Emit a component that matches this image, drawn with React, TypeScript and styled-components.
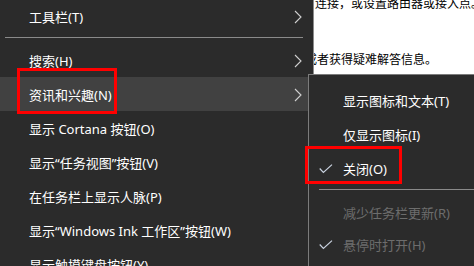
import React from 'react';
import styled, { createGlobalStyle } from 'styled-components';

const GlobalStyle = createGlobalStyle`
  html, body {
    margin: 0;
    padding: 0;
    background: #ffffff;
  }
  * {
    box-sizing: border-box;
  }
`;

// Latin face first so that quotes and brackets stay narrow, as in Microsoft YaHei UI
const FONT = `"Noto Sans", "Noto Sans CJK SC", sans-serif`;

interface MenuEntry {
  label: string;
  submenu?: boolean;
  hovered?: boolean;
}

const mainItems: MenuEntry[] = [
  { label: '搜索(H)', submenu: true },
  { label: '资讯和兴趣(N)', submenu: true, hovered: true },
  { label: '显示 Cortana 按钮(O)' },
  { label: '显示“任务视图”按钮(V)' },
  { label: '在任务栏上显示人脉(P)' },
  { label: '显示“Windows Ink 工作区”按钮(W)' },
  { label: '显示触摸键盘按钮(Y)' },
];

const Chevron = () => (
  <svg width="8" height="14" viewBox="0 0 8 14">
    <polyline points="1,1 7,7 1,13" fill="none" stroke="#d0d0d0" strokeWidth="1.1" />
  </svg>
);

const Check = () => (
  <svg width="14" height="10" viewBox="0 0 14 10">
    <polyline points="0.7,4.5 4.4,8.4 13,0.6" fill="none" stroke="#c9d2e0" strokeWidth="1.2" />
  </svg>
);

const App: React.FC = () => {
  return (
    <>
      <GlobalStyle />
      <Screen>
        <PageText>
          <PageLine $indent={315} $top={-5}>连接，或设置路由器或接入点。</PageLine>
          <PageLine $indent={305} $top={40}>或者获得疑难解答信息。</PageLine>
        </PageText>

        <ContextMenu>
          <MenuRow $height={32}>
            <span>工具栏(T)</span>
            <Chevron />
          </MenuRow>
          <Separator />
          {mainItems.map((item) => (
            <MenuRow key={item.label} $height={34} $hovered={item.hovered}>
              <span>{item.label}</span>
              {item.submenu && <Chevron />}
            </MenuRow>
          ))}
        </ContextMenu>

        <SubMenu>
          <SubRow $height={34}>显示图标和文本(T)</SubRow>
          <SubRow $height={34}>仅显示图标(I)</SubRow>
          <SubRow $height={34}>
            <CheckSlot>
              <Check />
            </CheckSlot>
            关闭(O)
          </SubRow>
          <SubSeparator />
          <SubRow $height={32} $disabled>减少任务栏更新(R)</SubRow>
          <SubRow $height={32} $disabled>
            <CheckSlot>
              <Check />
            </CheckSlot>
            悬停时打开(H)
          </SubRow>
        </SubMenu>

        <Highlight $left={17} $top={68} $width={100} $height={46} />
        <Highlight $left={305} $top={146} $width={97} $height={38} />
      </Screen>
    </>
  );
};

const Screen = styled.div`
  position: relative;
  width: 474px;
  height: 266px;
  overflow: hidden;
  background: #ffffff;
  font-family: ${FONT};
`;

const PageText = styled.div`
  display: flex;
  flex-direction: column;
`;

const PageLine = styled.p<{ $indent: number; $top: number }>`
  margin: ${({ $top }) => $top}px 0 0 ${({ $indent }) => $indent}px;
  font-family: "Noto Sans CJK SC", sans-serif;
  font-size: 12px;
  line-height: 16px;
  color: #000000;
  white-space: nowrap;
`;

const ContextMenu = styled.div`
  position: absolute;
  top: 0;
  left: 0;
  bottom: 0;
  width: 314px;
  background: #2b2b2b;
  border-right: 1px solid #8c8c8c;
  display: flex;
  flex-direction: column;
`;

const MenuRow = styled.div<{ $height: number; $hovered?: boolean }>`
  height: ${({ $height }) => $height}px;
  flex-shrink: 0;
  display: flex;
  align-items: center;
  justify-content: space-between;
  padding: 0 11px 0 29px;
  background: ${({ $hovered }) => ($hovered ? '#414141' : 'transparent')};
  color: #ffffff;
  font-size: 13px;
  white-space: nowrap;

  svg {
    margin-top: 1px;
  }
`;

const Separator = styled.div`
  height: 1px;
  margin: 5px 10px 5px 5px;
  background: #8a8a8a;
  flex-shrink: 0;
`;

const SubMenu = styled.div`
  position: absolute;
  top: 74px;
  left: 308px;
  right: -2px;
  bottom: -2px;
  background: #2b2b2b;
  border: 1px solid #7c7c7c;
  padding-top: 8px;
  display: flex;
  flex-direction: column;
`;

const SubRow = styled.div<{ $height: number; $disabled?: boolean }>`
  position: relative;
  height: ${({ $height }) => $height}px;
  flex-shrink: 0;
  display: flex;
  align-items: center;
  padding-left: 34px;
  font-size: 13px;
  white-space: nowrap;
  color: ${({ $disabled }) => ($disabled ? '#6d6d6d' : '#ffffff')};
`;

const CheckSlot = styled.span`
  position: absolute;
  left: 10px;
  top: 50%;
  margin-top: -4px;
  display: flex;
`;

const SubSeparator = styled.div`
  height: 1px;
  margin: 4px 0 6px 10px;
  background: #8a8a8a;
  flex-shrink: 0;
`;

const Highlight = styled.div<{ $left: number; $top: number; $width: number; $height: number }>`
  position: absolute;
  left: ${({ $left }) => $left}px;
  top: ${({ $top }) => $top}px;
  width: ${({ $width }) => $width}px;
  height: ${({ $height }) => $height}px;
  border: 3px solid #ff0000;
  pointer-events: none;
`;

export default App;
